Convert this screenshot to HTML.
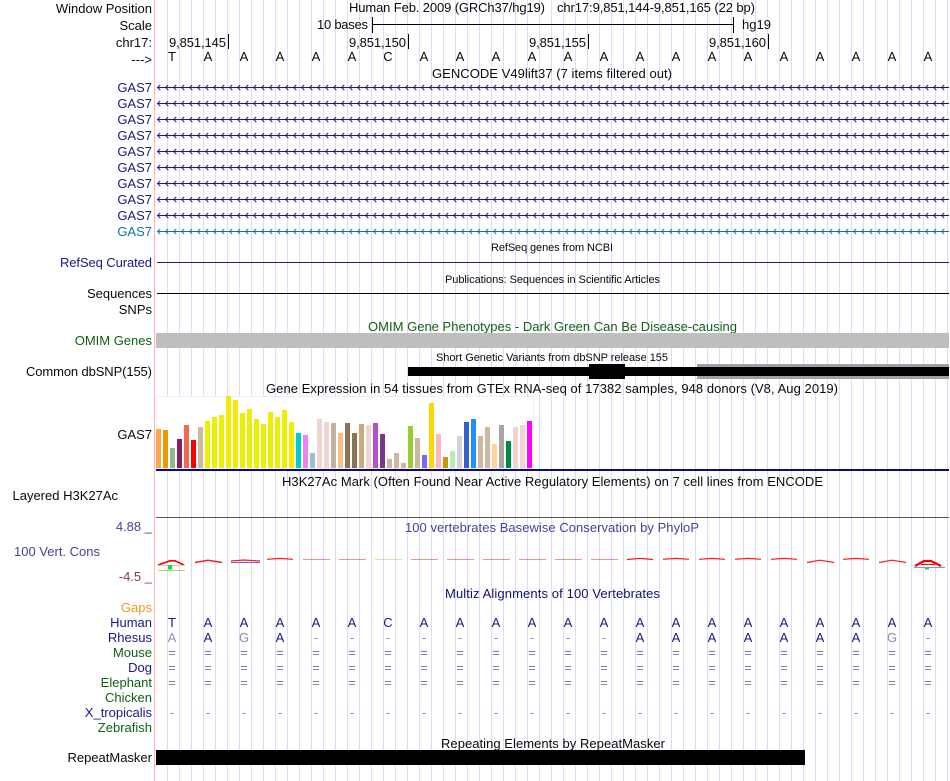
<!DOCTYPE html>
<html><head><meta charset="utf-8"><style>
html,body{margin:0;padding:0;background:#fff}
svg{display:block}
text{font-family:"Liberation Sans",sans-serif;font-size:13px;fill:#0a0a0a}
.l{text-anchor:end}.c{text-anchor:middle}.s{font-size:11px}
.n{fill:#191980}.g{fill:#0f620f}.b{text-anchor:middle}
.w{fill:none;stroke:#f00;stroke-width:1.200;stroke-opacity:.9}
</style></head><body>
<svg width="950" height="781" viewBox="0 0 950 781" xmlns="http://www.w3.org/2000/svg">
<defs>
<pattern id="grid" patternUnits="userSpaceOnUse" x="167" y="0" width="12" height="10"><rect width="1" height="10" fill="#dcdcfa"/></pattern>
<pattern id="a1" patternUnits="userSpaceOnUse" x="157" y="84" width="8" height="16"><path d="M3.200 1L.6 3.500L3.200 6" fill="none" stroke="#191980" stroke-width="1"/></pattern>
<pattern id="a2" patternUnits="userSpaceOnUse" x="157" y="228" width="8" height="16"><path d="M3.200 1L.6 3.500L3.200 6" fill="none" stroke="#1070b0" stroke-width="1"/></pattern>
</defs>
<rect width="950" height="781" fill="#fff"/>
<rect x="156" width="794" height="781" fill="url(#grid)"/>
<rect x="154" width="1" height="781" fill="#ffb0b0"/>

<text class="l" x="152" y="13">Window Position</text>
<text x="349" y="12" textLength="196">Human Feb. 2009 (GRCh37/hg19)</text>
<text x="557" y="12" textLength="198">chr17:9,851,144-9,851,165 (22 bp)</text>
<text class="l" x="152" y="30">Scale</text>
<text x="317" y="29" textLength="51">10 bases</text>
<rect x="372" y="17" width="1" height="16" fill="#000"/><rect x="372" y="24" width="361" height="1" fill="#000"/><rect x="733" y="17" width="1" height="16" fill="#000"/>
<text x="742" y="29">hg19</text>
<text class="l" x="152" y="47">chr17:</text>
<text x="169" y="47" textLength="57">9,851,145</text><rect x="228" y="34" width="1" height="15" fill="#000"/>
<text x="349" y="47" textLength="57">9,851,150</text><rect x="408" y="34" width="1" height="15" fill="#000"/>
<text x="529" y="47" textLength="57">9,851,155</text><rect x="588" y="34" width="1" height="15" fill="#000"/>
<text x="709" y="47" textLength="57">9,851,160</text><rect x="768" y="34" width="1" height="15" fill="#000"/>
<text class="l" x="152" y="64">---&gt;</text>
<text class="b" x="172 208 244 280 316 352 388 424 460 496 532 568 604 640 676 712 748 784 820 856 892 928" y="61">TAAAAACAAAAAAAAAAAAAAA</text>

<text x="432" y="78" textLength="240">GENCODE V49lift37 (7 items filtered out)</text>
<g class="n">
<text class="l n" x="152" y="92">GAS7</text><text class="l n" x="152" y="108">GAS7</text><text class="l n" x="152" y="124">GAS7</text><text class="l n" x="152" y="140">GAS7</text><text class="l n" x="152" y="156">GAS7</text><text class="l n" x="152" y="172">GAS7</text><text class="l n" x="152" y="188">GAS7</text><text class="l n" x="152" y="204">GAS7</text><text class="l n" x="152" y="220">GAS7</text>
</g>
<text class="l" x="152" y="236" style="fill:#1070b0">GAS7</text>
<g fill="#191980">
<rect x="157" y="87" width="792" height="1"/><rect x="157" y="103" width="792" height="1"/><rect x="157" y="119" width="792" height="1"/><rect x="157" y="135" width="792" height="1"/><rect x="157" y="151" width="792" height="1"/><rect x="157" y="167" width="792" height="1"/><rect x="157" y="183" width="792" height="1"/><rect x="157" y="199" width="792" height="1"/><rect x="157" y="215" width="792" height="1"/>
</g>
<rect x="157" y="231" width="792" height="1" fill="#1070b0"/>
<rect x="157" y="84" width="792" height="144" fill="url(#a1)"/>
<rect x="157" y="228" width="792" height="7" fill="url(#a2)"/>

<text class="s" x="491" y="251" textLength="122">RefSeq genes from NCBI</text>
<text class="l n" x="152" y="267" textLength="92">RefSeq Curated</text>
<rect x="157" y="262" width="792" height="1" fill="#191980"/>
<text class="s" x="445" y="283" textLength="215">Publications: Sequences in Scientific Articles</text>
<text class="l" x="152" y="298">Sequences</text>
<rect x="157" y="293" width="792" height="1" fill="#000"/>
<text class="l" x="152" y="314">SNPs</text>
<text class="g" x="368" y="331" textLength="369">OMIM Gene Phenotypes - Dark Green Can Be Disease-causing</text>
<text class="l g" x="152" y="345">OMIM Genes</text>
<rect x="156" y="333" width="793" height="15" fill="#bebebe"/>

<text class="s" x="436" y="361" textLength="232">Short Genetic Variants from dbSNP release 155</text>
<text class="l" x="152" y="376" textLength="126">Common dbSNP(155)</text>
<rect x="697" y="364" width="252" height="15" fill="#a0a0a0"/>
<rect x="408" y="367" width="541" height="9" fill="#000"/>
<rect x="589" y="364" width="36" height="15" fill="#000"/>

<text x="266" y="393" textLength="572">Gene Expression in 54 tissues from GTEx RNA-seq of 17382 samples, 948 donors (V8, Aug 2019)</text>
<text class="l" x="152" y="439">GAS7</text>
<rect x="156.500" y="396.500" width="377" height="72" fill="#fff" stroke="#efefef"/>
<g>
<rect x="156" y="429" width="5" height="39" fill="#ffa54f"/><rect x="163" y="430" width="5" height="38" fill="#ee9a00"/><rect x="170" y="448" width="5" height="20" fill="#8fbc8f"/><rect x="177" y="439" width="5" height="29" fill="#8b1c62"/><rect x="184" y="425" width="5" height="43" fill="#ee6a50"/><rect x="191" y="440" width="5" height="28" fill="#ff0000"/><rect x="198" y="427" width="5" height="41" fill="#cdb79e"/>
<g fill="#eeee00"><rect x="205" y="421" width="5" height="47"/><rect x="212" y="417" width="5" height="51"/><rect x="219" y="415" width="5" height="53"/><rect x="226" y="396" width="5" height="72"/><rect x="233" y="400" width="5" height="68"/><rect x="240" y="413" width="5" height="55"/><rect x="247" y="409" width="5" height="59"/><rect x="254" y="419" width="5" height="49"/><rect x="261" y="424" width="5" height="44"/><rect x="268" y="412" width="5" height="56"/><rect x="275" y="417" width="5" height="51"/><rect x="282" y="410" width="5" height="58"/><rect x="289" y="422" width="5" height="46"/></g>
<rect x="296" y="433" width="5" height="35" fill="#00cdcd"/><rect x="303" y="435" width="5" height="33" fill="#ee82ee"/><rect x="310" y="453" width="5" height="15" fill="#9ac0cd"/><rect x="317" y="419" width="5" height="49" fill="#eed5d2"/><rect x="324" y="422" width="5" height="46" fill="#eed5d2"/><rect x="331" y="423" width="5" height="45" fill="#c6b09c"/><rect x="338" y="433" width="5" height="35" fill="#f4c08a"/><rect x="345" y="423" width="5" height="45" fill="#8b7355"/><rect x="352" y="433" width="5" height="35" fill="#8b7355"/><rect x="359" y="424" width="5" height="44" fill="#cdaa7d"/><rect x="366" y="425" width="5" height="43" fill="#eed5d2"/><rect x="373" y="423" width="5" height="45" fill="#b452cd"/><rect x="380" y="434" width="5" height="34" fill="#7a378b"/><rect x="387" y="459" width="5" height="9" fill="#cdb79e"/><rect x="394" y="453" width="5" height="15" fill="#cdb79e"/><rect x="401" y="463" width="5" height="5" fill="#cdb79e"/><rect x="408" y="426" width="5" height="42" fill="#9acd32"/><rect x="415" y="438" width="5" height="30" fill="#cdb79e"/><rect x="422" y="455" width="5" height="13" fill="#7b68ee"/><rect x="429" y="403" width="5" height="65" fill="#ffd700"/><rect x="436" y="434" width="5" height="34" fill="#ffb6c1"/><rect x="443" y="457" width="5" height="11" fill="#cd950c"/><rect x="450" y="451" width="5" height="17" fill="#b4eeb4"/><rect x="457" y="436" width="5" height="32" fill="#d3d3d3"/><rect x="464" y="422" width="5" height="46" fill="#3a5fcd"/><rect x="471" y="419" width="5" height="49" fill="#1e90ff"/><rect x="478" y="436" width="5" height="32" fill="#cdb79e"/><rect x="485" y="427" width="5" height="41" fill="#cdb79e"/><rect x="492" y="444" width="5" height="24" fill="#ffd39b"/><rect x="499" y="425" width="5" height="43" fill="#a6a6a6"/><rect x="506" y="441" width="5" height="27" fill="#008b45"/><rect x="513" y="427" width="5" height="41" fill="#eed5d2"/><rect x="520" y="425" width="5" height="43" fill="#eed5d2"/><rect x="527" y="421" width="5" height="47" fill="#ff00ff"/>
</g>
<rect x="156" y="469" width="793" height="2" fill="#0a0a78"/>

<text x="282" y="486" textLength="541">H3K27Ac Mark (Often Found Near Active Regulatory Elements) on 7 cell lines from ENCODE</text>
<text class="l" x="118" y="500">Layered H3K27Ac</text>
<rect x="156" y="517" width="793" height="1" fill="#6b4f45"/>
<text x="405" y="532" textLength="294" style="fill:#45458f">100 vertebrates Basewise Conservation by PhyloP</text>
<text class="l" x="152" y="531" style="fill:#45458f">4.88 _</text>
<text x="14" y="556" style="fill:#45458f">100 Vert. Cons</text>
<text class="l" x="152" y="581" style="fill:#8b3a3a">-4.5 _</text>

<path d="M158 565L170 560.800H175L184 565" fill="none" stroke="#f00" stroke-width="1.700"/>
<rect x="158" y="565" width="27" height="1" fill="#dcc8c8"/>
<rect x="168" y="565" width="4" height="4.500" fill="#00e81e"/>
<rect x="158" y="570" width="27" height="1" fill="#c8c878"/>
<path d="M195 562.500L208 560.200L222 562.500" class="w" style="stroke-width:1.500"/>
<path d="M231 561L244 560L260 561" class="w"/><rect x="231" y="562" width="29" height="1" fill="#6868e8"/>
<path d="M267 559.300L280 558.400L293 559.300" class="w"/>
<g fill="#f00" fill-opacity=".45">
<rect x="303" y="559" width="27" height="1"/><rect x="339" y="559" width="27" height="1"/><rect x="411" y="559" width="27" height="1"/><rect x="447" y="559" width="27" height="1"/><rect x="483" y="559" width="27" height="1"/><rect x="519" y="559" width="27" height="1"/><rect x="555" y="559" width="27" height="1"/><rect x="591" y="559" width="27" height="1"/>
</g>
<rect x="375" y="559" width="27" height="1" fill="#b8b830" fill-opacity=".45"/>
<path d="M627 559.500L640 558.400L653 559.500" class="w"/>
<path d="M663 559.300L676 558.400L689 559.300" class="w"/><path d="M699 559.300L712 558.400L725 559.300" class="w"/><path d="M735 559.300L748 558.400L761 559.300" class="w"/><path d="M771 559.300L784 558.400L797 559.300" class="w"/>
<path d="M807 562.500L820 560.200L834 562.500" class="w"/>
<path d="M843 559.300L856 558.400L869 559.300" class="w"/>
<path d="M879 562.500L892 560.200L906 562.500" class="w"/>
<path d="M915 566L924 561H931L941 566" fill="none" stroke="#f00" stroke-width="2.200"/>
<rect x="921" y="564" width="14" height="1" fill="#f00"/>
<rect x="914" y="567" width="31" height="1" fill="#9090e0"/>
<rect x="925" y="568" width="4" height="1.500" fill="#00e81e"/>

<text x="445" y="598" textLength="215" style="fill:#101075">Multiz Alignments of 100 Vertebrates</text>
<text class="l" x="152" y="612" style="fill:#ee9a1a">Gaps</text>
<text class="l n" x="152" y="627">Human</text>
<text class="l n" x="152" y="642">Rhesus</text>
<text class="l g" x="152" y="657">Mouse</text>
<text class="l n" x="152" y="672">Dog</text>
<text class="l g" x="152" y="687">Elephant</text>
<text class="l g" x="152" y="702">Chicken</text>
<text class="l n" x="152" y="717">X_tropicalis</text>
<text class="l g" x="152" y="732">Zebrafish</text>
<text class="b n" x="172 208 244 280 316 352 388 424 460 496 532 568 604 640 676 712 748 784 820 856 892 928" y="627">TAAAAACAAAAAAAAAAAAAAA</text>
<text class="b n" x="208 280 640 676 712 748 784 820 856" y="642">AAAAAAAAA</text>
<text class="b" style="fill:#8c8cb8" x="172 244 892" y="642">AGG</text>
<text class="b" style="fill:#8c8cb8" x="316 352 388 424 460 496 532 568 604 928" y="642">----------</text>
<text class="b" style="fill:#7a7ab0" x="172 208 244 280 316 352 388 424 460 496 532 568 604 640 676 712 748 784 820 856 892 928" y="657">======================</text>
<text class="b" style="fill:#7a7ab0" x="172 208 244 280 316 352 388 424 460 496 532 568 604 640 676 712 748 784 820 856 892 928" y="672">======================</text>
<text class="b" style="fill:#7a7ab0" x="172 208 244 280 316 352 388 424 460 496 532 568 604 640 676 712 748 784 820 856 892 928" y="687">======================</text>
<text class="b" style="fill:#8c8cb8" x="172 208 244 280 316 352 388 424 460 496 532 568 604 640 676 712 748 784 820 856 892 928" y="717">----------------------</text>

<text x="441" y="748" textLength="224">Repeating Elements by RepeatMasker</text>
<text class="l" x="152" y="762">RepeatMasker</text>
<rect x="156" y="750" width="649" height="15" fill="#000"/>
</svg>
</body></html>
